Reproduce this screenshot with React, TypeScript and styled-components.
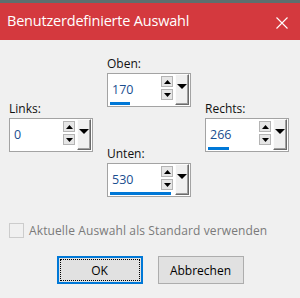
import React from 'react';
import styled, { createGlobalStyle } from 'styled-components';

const GlobalStyle = createGlobalStyle`
  html, body {
    margin: 0;
    padding: 0;
    background: #f0f0f0;
  }
  body {
    width: 300px;
    height: 298px;
    overflow: hidden;
    font-family: "Open Sans", "Noto Sans", sans-serif;
  }
`;

const Dialog = styled.div`
  width: 300px;
  height: 298px;
  display: flex;
  flex-direction: column;
  background: #f0f0f0;
`;

const TopStrip = styled.div`
  height: 3px;
  background: #5d6f6e;
`;

const TitleBar = styled.div`
  height: 37px;
  background: #d4393e;
  display: flex;
  align-items: center;
  justify-content: space-between;
  padding: 0 12px 0 7px;
`;

const Title = styled.span`
  color: #fff;
  font-size: 14.5px;
  letter-spacing: -0.2px;
  padding-bottom: 2px;
`;

const CloseIcon = styled.svg`
  width: 12px;
  height: 12px;
  align-self: flex-start;
  margin-top: 14px;
`;

const Body = styled.div`
  display: flex;
  flex-direction: column;
  padding: 16px 0 0 9px;
`;

const Grid = styled.div`
  display: flex;
  align-items: center;
  gap: 14px;
`;

const Column = styled.div`
  display: flex;
  flex-direction: column;
  gap: 39px;
`;

const Group = styled.div`
  display: flex;
  flex-direction: column;
`;

const Label = styled.label`
  height: 16px;
  line-height: 16px;
  margin-bottom: 1px;
  font-size: 12px;
  color: #111;
`;

const Field = styled.div`
  width: 84px;
  height: 34px;
  box-sizing: border-box;
  border: 1px solid #a3a3a3;
  background: #fff;
  display: flex;
`;

const Main = styled.div`
  flex: 1;
  display: flex;
  flex-direction: column;
`;

const Row = styled.div`
  flex: 1;
  display: flex;
  align-items: center;
`;

const Value = styled.span`
  flex: 1;
  padding-left: 4px;
  padding-top: 2px;
  font-size: 12.5px;
  color: #1a4d8f;
`;

const Spins = styled.div`
  display: flex;
  flex-direction: column;
  gap: 2px;
  margin-right: 2px;
`;

const SpinButton = styled.div`
  width: 12px;
  height: 11px;
  box-sizing: border-box;
  border: 1px solid #b4b4b4;
  background: #e6e6e6;
  display: flex;
  align-items: center;
  justify-content: center;
`;

const Track = styled.div`
  height: 3px;
  margin: 0 0 1px 2px;
`;

const Bar = styled.div`
  height: 3px;
  background: #0078d7;
`;

const DropButton = styled.div`
  width: 14px;
  margin: 0 1px 1px 0;
  box-sizing: border-box;
  background: #f0f0f0;
  border-left: 1px solid #fcfcfc;
  border-top: 1px solid #fcfcfc;
  border-right: 1px solid #6a6a6a;
  border-bottom: 1px solid #6a6a6a;
  box-shadow: inset -1px -1px 0 #a0a0a0;
  display: flex;
  align-items: center;
  justify-content: center;
  padding-bottom: 6px;
`;

const CheckRow = styled.div`
  display: flex;
  align-items: center;
  gap: 5px;
  margin-top: 25px;
  color: #7a7a7a;
  font-size: 12px;
  letter-spacing: 0.12px;
`;

const CheckBox = styled.div`
  width: 15px;
  height: 15px;
  box-sizing: border-box;
  border: 1px solid #cccccc;
  background: #f0f0f0;
`;

const Buttons = styled.div`
  display: flex;
  justify-content: center;
  gap: 15px;
  margin: 17px 0 0 -9px;
`;

const Button = styled.button<{ $primary?: boolean }>`
  width: 86px;
  height: 28px;
  box-sizing: border-box;
  padding: 0;
  background: #e1e1e1;
  border: ${p => (p.$primary ? '2px solid #0078d7' : '1px solid #adadad')};
  font-family: "Open Sans", "Noto Sans", sans-serif;
  font-size: 12px;
  color: #000;
  display: flex;
  align-items: center;
  justify-content: center;
`;

const FocusRing = styled.span`
  flex: 1;
  align-self: stretch;
  margin: 1px;
  border: 1px dotted #000;
  display: flex;
  align-items: center;
  justify-content: center;
`;

const Triangle = ({ up, w, h }: { up?: boolean; w: number; h: number }) => (
  <svg width={w} height={h} viewBox={`0 0 ${w} ${h}`}>
    <polygon points={up ? `0,${h} ${w},${h} ${w / 2},0` : `0,0 ${w},0 ${w / 2},${h}`} fill="#000" />
  </svg>
);

const SpinField = ({ label, value, max }: { label: string; value: number; max: number }) => (
  <Group>
    <Label>{label}</Label>
    <Field>
      <Main>
        <Row>
          <Value>{value}</Value>
          <Spins>
            <SpinButton><Triangle up w={7} h={4} /></SpinButton>
            <SpinButton><Triangle w={7} h={4} /></SpinButton>
          </Spins>
        </Row>
        <Track>
          <Bar style={{ width: Math.round((value / max) * 62) }} />
        </Track>
      </Main>
      <DropButton><Triangle w={10} h={5} /></DropButton>
    </Field>
  </Group>
);

export default function App() {
  return (
    <Dialog>
      <GlobalStyle />
      <TopStrip />
      <TitleBar>
        <Title>Benutzerdefinierte Auswahl</Title>
        <CloseIcon viewBox="0 0 12 12">
          <path d="M0.5 0.5 L11.5 11.5 M11.5 0.5 L0.5 11.5" stroke="#fff" strokeWidth="1.1" />
        </CloseIcon>
      </TitleBar>
      <Body>
        <Grid>
          <SpinField label="Links:" value={0} max={800} />
          <Column>
            <SpinField label="Oben:" value={170} max={540} />
            <SpinField label="Unten:" value={530} max={540} />
          </Column>
          <SpinField label="Rechts:" value={266} max={785} />
        </Grid>
        <CheckRow>
          <CheckBox />
          <span>Aktuelle Auswahl als Standard verwenden</span>
        </CheckRow>
        <Buttons>
          <Button $primary><FocusRing>OK</FocusRing></Button>
          <Button>Abbrechen</Button>
        </Buttons>
      </Body>
    </Dialog>
  );
}
